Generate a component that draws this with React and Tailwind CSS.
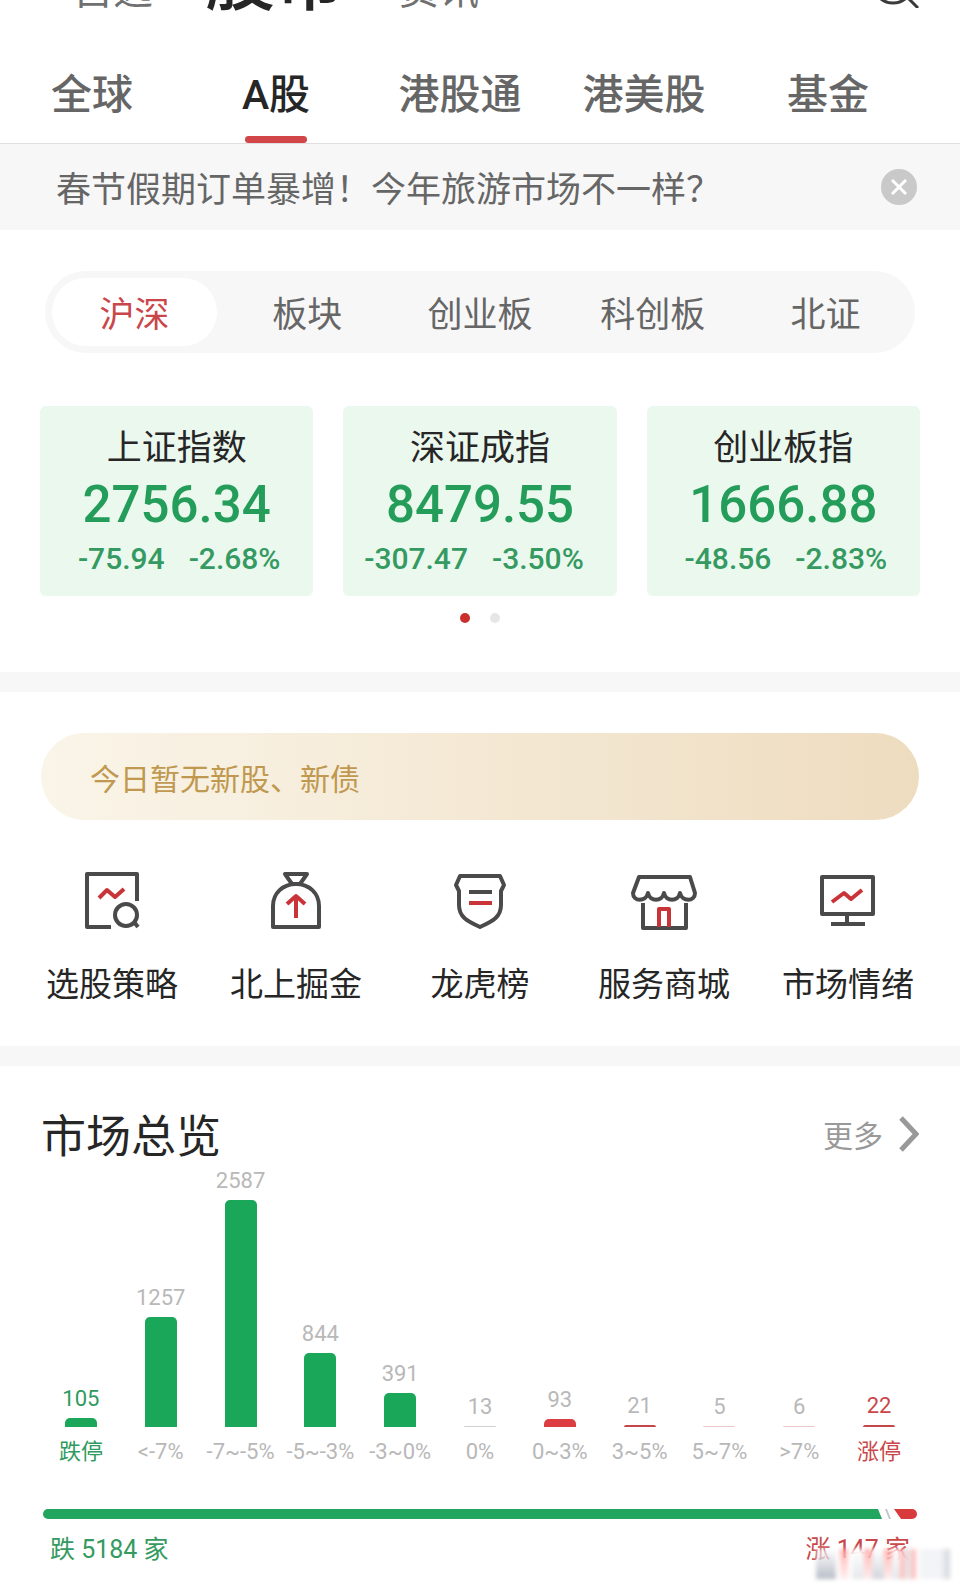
import { useState } from "react";

const topTabs = ["全球", "A股", "港股通", "港美股", "基金"];
const boards = ["沪深", "板块", "创业板", "科创板", "北证"];

const indexes = [
  { name: "上证指数", value: "2756.34", change: "-75.94", percent: "-2.68%" },
  { name: "深证成指", value: "8479.55", change: "-307.47", percent: "-3.50%" },
  { name: "创业板指", value: "1666.88", change: "-48.56", percent: "-2.83%" },
];

const ranges = [
  { label: "跌停", count: 105, bar: "bg-[#1aa75a]", text: "text-[#2f9a5f]" },
  { label: "<-7%", count: 1257, bar: "bg-[#1aa75a]" },
  { label: "-7~-5%", count: 2587, bar: "bg-[#1aa75a]" },
  { label: "-5~-3%", count: 844, bar: "bg-[#1aa75a]" },
  { label: "-3~0%", count: 391, bar: "bg-[#1aa75a]" },
  { label: "0%", count: 13, bar: "bg-[#d0d0d0]" },
  { label: "0~3%", count: 93, bar: "bg-[#dc3d40]" },
  { label: "3~5%", count: 21, bar: "bg-[#c4484b]" },
  { label: "5~7%", count: 5, bar: "bg-[#ecc8cb]" },
  { label: ">7%", count: 6, bar: "bg-[#ecc8cb]" },
  { label: "涨停", count: 22, bar: "bg-[#c4484b]", text: "text-[#c9474a]" },
];

const CHART_HEIGHT = 227;
const maxCount = Math.max(...ranges.map((r) => r.count));

function Icon({ children }) {
  return (
    <svg
      width="68"
      height="64"
      viewBox="0 0 68 64"
      fill="none"
      stroke="#4a4a4a"
      strokeWidth="4"
      strokeLinejoin="round"
    >
      {children}
    </svg>
  );
}

const tools = [
  {
    name: "选股策略",
    icon: (
      <Icon>
        <path d="M33 59H9V6h50v27" />
        <path d="M21 30l8-8 8 7 9-8" stroke="#c93438" />
        <circle cx="48" cy="47" r="11" />
        <path d="M56 54l4 5" />
      </Icon>
    ),
  },
  {
    name: "北上掘金",
    icon: (
      <Icon>
        <path d="M23 6h22l-7 10h-8z" />
        <path d="M34 16c-13 0-23 9-23 22v21h46V38c0-13-10-22-23-22z" />
        <path d="M34 50V29M25 36l9-8 9 8" stroke="#c93438" />
      </Icon>
    ),
  },
  {
    name: "龙虎榜",
    icon: (
      <Icon>
        <path d="M14 8h40l4 9-3 6v14c0 12-8 16-21 22-13-6-21-10-21-22V23l-3-6z" />
        <path d="M23 24h23" />
        <path d="M23 35h23" stroke="#c93438" />
      </Icon>
    ),
  },
  {
    name: "服务商城",
    icon: (
      <Icon>
        <path d="M9 9h51l5 16c0 9-13 9-15 0-2 9-14 9-16 0-2 9-14 9-16 0-2 9-15 9-15 0z" />
        <path d="M13 35v25h43V35" />
        <path d="M29 59V41h10v18" stroke="#c93438" />
      </Icon>
    ),
  },
  {
    name: "市场情绪",
    icon: (
      <Icon>
        <path d="M8 9h51v37H8zM33 46v9M17 56h34" />
        <path d="M18 34l12-9 7 6 11-9" stroke="#c93438" />
      </Icon>
    ),
  },
];

export default function App() {
  const [tab, setTab] = useState("A股");
  const [board, setBoard] = useState("沪深");
  const [showNotice, setShowNotice] = useState(true);

  return (
    <div className="relative overflow-hidden bg-white text-[#262626] font-['Noto_Sans_CJK_SC',sans-serif]">
      {/* Header, scrolled almost out of view */}
      <header className="flex h-4 items-end overflow-hidden pl-[73px] pr-10 font-[Roboto,'Noto_Sans_CJK_SC',sans-serif] leading-none text-[#707070]">
        <button className="pb-[5px] text-[40px]">自选</button>
        <button className="ml-[52px] text-[70px] font-medium text-[#262626]">股市</button>
        <button className="ml-[54px] pb-[5px] text-[40px]">资讯</button>
        <button aria-label="搜索" className="ml-auto pb-2">
          <svg width="46" height="46" viewBox="0 0 46 46" fill="none" stroke="#3a3a3a" strokeWidth="3">
            <circle cx="19" cy="21" r="20" />
            <path d="M33 35l11 11" />
          </svg>
        </button>
      </header>

      <nav className="grid h-32 grid-cols-5 border-b border-[#e0e0e0] pr-10 font-[Roboto,'Noto_Sans_CJK_SC',sans-serif]">
        {topTabs.map((name) => (
          <button
            key={name}
            onClick={() => setTab(name)}
            className={`flex flex-col items-center justify-end text-[41px] font-medium ${
              tab === name ? "text-[#262626]" : "text-[#666]"
            }`}
          >
            <span className="pb-[11px] leading-[60px]">{name}</span>
            <span className={`h-[7px] w-[62px] rounded-full ${tab === name ? "bg-[#d24548]" : ""}`} />
          </button>
        ))}
      </nav>

      {showNotice && (
        <div className="flex h-[86px] items-center justify-between bg-[#f7f7f7] pl-14 pr-[43px]">
          <a href="#notice" className="text-[35px] text-[#666]">
            春节假期订单暴增！今年旅游市场不一样？
          </a>
          <button
            aria-label="关闭"
            onClick={() => setShowNotice(false)}
            className="flex size-9 items-center justify-center rounded-full bg-[#c9c9c9]"
          >
            <svg width="16" height="16" viewBox="0 0 16 16" stroke="#fff" strokeWidth="3">
              <path d="M1 1l14 14M15 1L1 15" />
            </svg>
          </button>
        </div>
      )}

      {/* Boards */}
      <div className="mx-[45px] mt-[41px] grid h-[82px] grid-cols-5 gap-2 rounded-full bg-[#f7f7f7] p-[7px]">
        {boards.map((name) => (
          <button
            key={name}
            onClick={() => setBoard(name)}
            className={`rounded-full text-[35px] ${
              board === name ? "bg-white text-[#c9474a]" : "text-[#666]"
            }`}
          >
            {name}
          </button>
        ))}
      </div>

      {/* Indexes */}
      <section className="mt-[53px] grid grid-cols-3 gap-[30px] px-10">
        {indexes.map((item) => (
          <div key={item.name} className="h-[190px] rounded-md bg-[#ebf8ee] pt-3 text-center">
            <h3 className="text-[35px] leading-[54px]">{item.name}</h3>
            <p className="font-[Roboto,sans-serif] text-[51px] font-medium leading-[66px] text-[#259d5a]">
              {item.value}
            </p>
            <p className="grid grid-cols-2 gap-6 font-[Roboto,sans-serif] text-3xl font-medium leading-[42px] text-[#359a61]">
              <span className="text-right">{item.change}</span>
              <span className="text-left">{item.percent}</span>
            </p>
          </div>
        ))}
      </section>
      <div className="flex justify-center gap-5 pt-[17px] pb-[49px]">
        <span className="size-[10px] rounded-full bg-[#c9302c]" />
        <span className="size-[10px] rounded-full bg-[#e6e6e6]" />
      </div>

      <div className="h-5 bg-[#f7f7f7]" />

      {/* New shares and tools */}
      <section className="pt-[41px]">
        <a
          href="#new"
          className="mx-[41px] flex h-[87px] items-center rounded-full bg-linear-to-r from-[#faf5e9] to-[#eedcbf] pl-[49px] text-3xl text-[#c0984f]"
        >
          今日暂无新股、新债
        </a>
        <div className="grid grid-cols-5 px-5 pt-12 pb-[38px]">
          {tools.map((tool) => (
            <button key={tool.name} className="flex flex-col items-center gap-6">
              {tool.icon}
              <span className="text-[33px] leading-[52px]">{tool.name}</span>
            </button>
          ))}
        </div>
      </section>

      <div className="h-5 bg-[#f7f7f7]" />

      {/* Market overview */}
      <section className="px-[41px] pt-[35px]">
        <div className="flex h-[65px] items-center justify-between">
          <h2 className="text-[45px]">市场总览</h2>
          <a href="#more" className="flex items-center gap-4 text-3xl text-[#999]">
            更多
            <svg width="20" height="36" viewBox="0 0 20 36" fill="none" stroke="#999" strokeWidth="5">
              <path d="M2 2l15 16L2 34" />
            </svg>
          </a>
        </div>

        <div className="mt-[2px] grid grid-cols-11 font-[Roboto,'Noto_Sans_CJK_SC',sans-serif] text-[22px] text-[#b8b8b8]">
          {ranges.map((r) => (
            <div key={r.label} className={`flex h-[300px] flex-col items-center justify-end ${r.text || ""}`}>
              <span className="pb-[6px] leading-[26px]">{r.count}</span>
              <span
                className={`w-8 rounded-t-[5px] ${r.bar}`}
                style={{ height: Math.max(1, Math.round((r.count / maxCount) * CHART_HEIGHT)) }}
              />
              <span className="whitespace-nowrap pt-[9px] leading-8">{r.label}</span>
            </div>
          ))}
        </div>

        {/* Fall / rise ratio */}
        <div className="mx-[2px] mt-[41px] flex h-[10px] gap-[3px]">
          <span className="flex-1 rounded-l-full bg-[#22a55e] [clip-path:polygon(0_0,calc(100%_-_4px)_0,100%_100%,0_100%)]" />
          <span className="w-[6px] bg-[#c4c4c4] [clip-path:polygon(0_0,2px_0,100%_100%,4px_100%)]" />
          <span className="w-[23px] rounded-r-full bg-[#d93b3d] [clip-path:polygon(0_0,100%_0,100%_100%,7px_100%)]" />
        </div>
        <div className="flex justify-between px-[9px] pt-[13px] pb-5 font-[Roboto,'Noto_Sans_CJK_SC',sans-serif] text-[25px] leading-9">
          <span className="text-[#359a61]">跌 5184 家</span>
          <span className="text-[#c9474a]">涨 147 家</span>
        </div>
      </section>

      {/* Smudged watermark */}
      <div className="absolute right-[10px] bottom-[9px] flex h-[30px] w-[134px] bg-white/60 blur-[2px]">
        <span className="w-5 bg-linear-to-b from-white/20 to-gray-400/70" />
        <span className="ml-1 w-2 bg-linear-to-b from-red-400/50 to-red-100/60" />
        <span className="ml-1 w-3 bg-linear-to-b from-white to-gray-200" />
        <span className="w-2 bg-linear-to-b from-red-400/50 to-red-100/60" />
        <span className="w-3 bg-linear-to-b from-white to-gray-300" />
        <span className="w-2 bg-linear-to-b from-red-400/50 to-red-100/60" />
        <span className="w-2 bg-linear-to-b from-white to-gray-200" />
        <span className="w-4 bg-linear-to-r from-red-400/50 via-gray-200 to-red-400/50" />
        <span className="ml-1 w-5 bg-gray-100" />
        <span className="flex-1 bg-linear-to-r from-gray-100 to-gray-300" />
      </div>
    </div>
  );
}
